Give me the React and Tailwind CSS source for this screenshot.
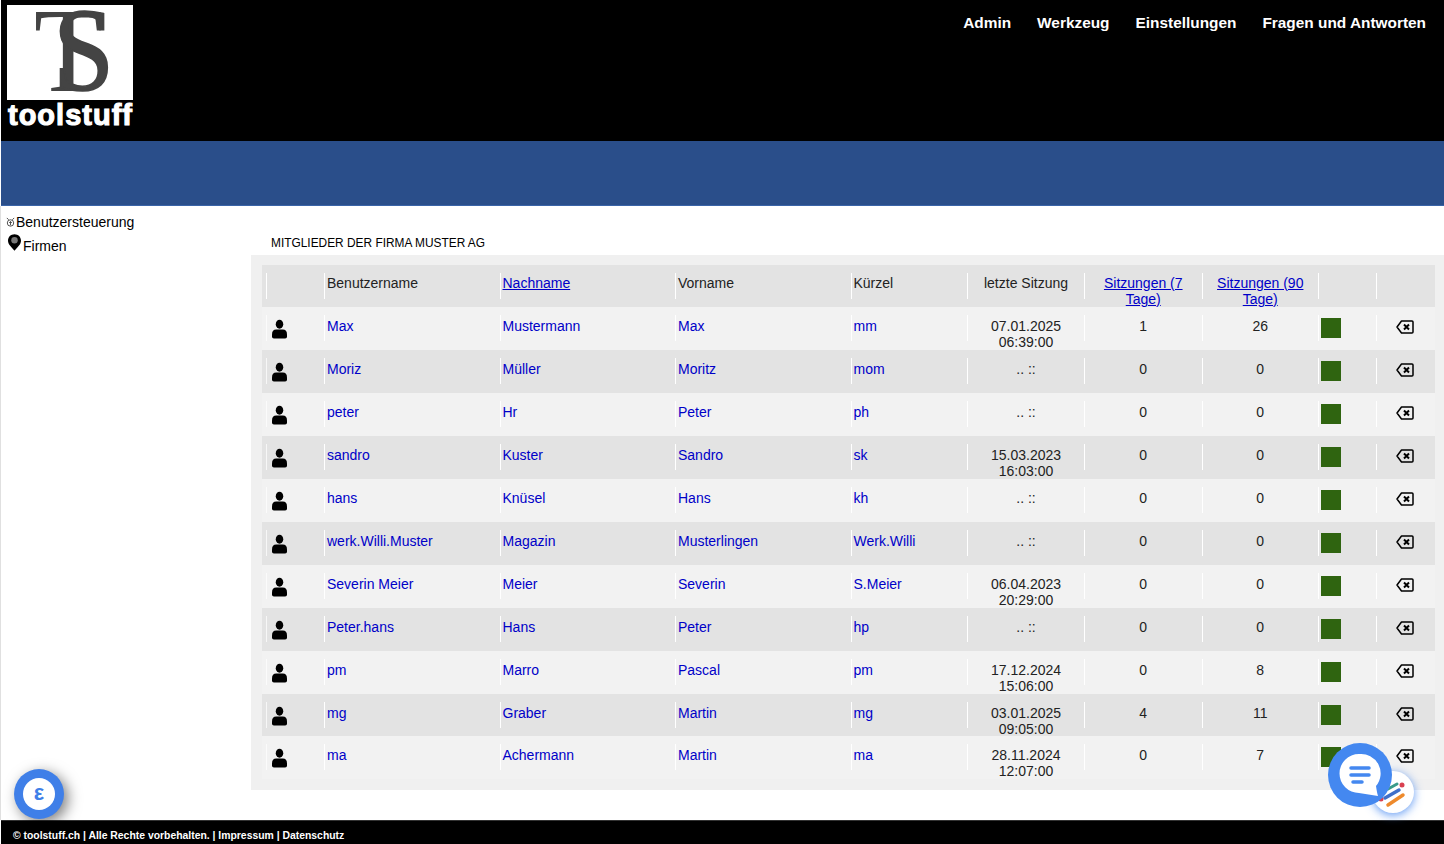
const members = [
	{ user: "Max", last: "Mustermann", first: "Max", short: "mm", date: "07.01.2025", time: "06:39:00", s7: "1", s90: "26" },
	{ user: "Moriz", last: "Müller", first: "Moritz", short: "mom", s7: "0", s90: "0" },
	{ user: "peter", last: "Hr", first: "Peter", short: "ph", s7: "0", s90: "0" },
	{ user: "sandro", last: "Kuster", first: "Sandro", short: "sk", date: "15.03.2023", time: "16:03:00", s7: "0", s90: "0" },
	{ user: "hans", last: "Knüsel", first: "Hans", short: "kh", s7: "0", s90: "0" },
	{ user: "werk.Willi.Muster", last: "Magazin", first: "Musterlingen", short: "Werk.Willi", s7: "0", s90: "0" },
	{ user: "Severin Meier", last: "Meier", first: "Severin", short: "S.Meier", date: "06.04.2023", time: "20:29:00", s7: "0", s90: "0" },
	{ user: "Peter.hans", last: "Hans", first: "Peter", short: "hp", s7: "0", s90: "0" },
	{ user: "pm", last: "Marro", first: "Pascal", short: "pm", date: "17.12.2024", time: "15:06:00", s7: "0", s90: "8" },
	{ user: "mg", last: "Graber", first: "Martin", short: "mg", date: "03.01.2025", time: "09:05:00", s7: "4", s90: "11" },
	{ user: "ma", last: "Achermann", first: "Martin", short: "ma", date: "28.11.2024", time: "12:07:00", s7: "0", s90: "7" },
];

const rowGrid =
	"grid grid-cols-[58px_175.5px_175.5px_175.5px_116.5px_117px_117.5px_116.5px_58px_59px] pl-1";
const cell = "border-l border-white h-[26px] pl-[2px] leading-4";
const centerCell = "border-l border-white h-[26px] text-center leading-4";

const UserIcon = () => (
	<svg viewBox="0 0 16 20" className="w-[15px] h-5 mt-[4px] ml-[5px]" fill="#000">
		<ellipse cx="8" cy="4.800" rx="4" ry="4.800" />
		<path d="M2 20 Q0 20 0 18 L0 15.500 Q0 10.500 4.500 10.500 L11.500 10.500 Q16 10.500 16 15.500 L16 18 Q16 20 14 20 Z" />
	</svg>
);

const DeleteIcon = () => (
	<svg viewBox="0 0 18 14" className="w-[18px] h-[14px] ml-[19px] mt-[5px]" fill="none" stroke="#000">
		<path d="M5.500 1 L16 1 Q17 1 17 2 L17 12 Q17 13 16 13 L5.500 13 L1 7 Z" strokeWidth="1.500" strokeLinejoin="round" />
		<path d="M8 4.500 L13 9.500 M13 4.500 L8 9.500" strokeWidth="2" />
	</svg>
);

const Logo = () => (
	<div className="w-[126px]">
		<div className="w-[126px] h-[95px] bg-white">
			<svg viewBox="0 0 126 95" className="w-full h-full overflow-visible">
				<text x="0" y="0" fontFamily="Liberation Serif" fontSize="112" fill="#444" transform="translate(27 86) scale(1 1.08)">
					T
				</text>
				<text x="0" y="0" fontFamily="Liberation Serif" fontSize="110" fill="#444" stroke="#444" strokeWidth="1.500" transform="translate(46 85) scale(1 1.08)">
					S
				</text>
			</svg>
		</div>
		<div className="text-white text-[29px] leading-[29px] font-bold tracking-[1px] [-webkit-text-stroke:1.100px_white] mt-[1px] ml-[1px]">
			toolstuff
		</div>
	</div>
);

const MemberRow = ({ m, index }) => (
	<div className={`${rowGrid} ${index === 9 ? "h-[42px]" : "h-[43px]"} pt-2 ${index % 2 === 0 ? "bg-[#f2f2f2]" : "bg-[#e3e3e3]"}`}>
		<div className="border-l border-white/70 h-[26px]">
			<UserIcon />
		</div>
		<div className={cell}>
			<a className="text-[#0000c8] block pt-[3px]">{m.user}</a>
		</div>
		<div className={cell}>
			<a className="text-[#0000c8] block pt-[3px]">{m.last}</a>
		</div>
		<div className={cell}>
			<a className="text-[#0000c8] block pt-[3px]">{m.first}</a>
		</div>
		<div className={cell}>
			<a className="text-[#0000c8] block pt-[3px]">{m.short}</a>
		</div>
		<div className={`${centerCell} pt-[3px]`}>
			{m.date ? (
				<>
					{m.date}
					<br />
					{m.time}
				</>
			) : (
				".. ::"
			)}
		</div>
		<div className={`${centerCell} pt-[3px]`}>{m.s7}</div>
		<div className={`${centerCell} pt-[3px]`}>{m.s90}</div>
		<div className="border-l border-white h-[26px] pl-[2px] pt-[3px]">
			<div className="w-5 h-5 bg-[#2f6410]" />
		</div>
		<div className="border-l border-white h-[26px]">
			<DeleteIcon />
		</div>
	</div>
);

export default function App() {
	return (
		<div className="h-[844px] flex flex-col font-['Liberation_Sans',Arial,sans-serif] text-[14px] text-[#222] bg-white overflow-hidden relative">
			<header className="ml-px h-[141px] bg-black flex justify-between pl-[6px] pt-[5px] pr-[18px]">
				<Logo />
				<nav className="flex gap-[26px] text-white text-[15.4px] font-bold pt-[9px] leading-[18px]">
					<a>Admin</a>
					<a>Werkzeug</a>
					<a>Einstellungen</a>
					<a>Fragen und Antworten</a>
				</nav>
			</header>
			<div className="ml-px h-[65px] bg-[#2a4e8a] border-b border-[#3a64a8]" />
			<main className="flex-1 flex border-l border-[#e0e0e0]">
				<aside className="w-[250px] text-black pt-[7px] pl-[4px]">
					<div className="flex items-center h-[18px]">
						<svg viewBox="0 0 12 12" className="w-[11px] h-[11px]" fill="none" stroke="#444" strokeWidth="1">
							<circle cx="6" cy="6.500" r="3.500" />
							<path d="M2 1 L4 3 M10 1 L8 3 M4.500 6 L7.500 6 M6 4.500 L6 9" />
						</svg>
						<span>Benutzersteuerung</span>
					</div>
					<div className="flex h-[20px] mt-[4px] ml-[3px]">
						<svg viewBox="0 0 14 18" className="w-[13px] h-[17px] -mt-[1px]">
							<path d="M7 0 C3 0 0 3 0 7 C0 11 4 14 7 18 C10 14 14 11 14 7 C14 3 11 0 7 0 Z" fill="#000" />
							<circle cx="7" cy="6.500" r="3.500" fill="#777" />
						</svg>
						<span className="ml-[2px] mt-[1px]">Firmen</span>
					</div>
				</aside>
				<section className="flex-1 min-w-0">
					<h2 className="h-[49px] pt-[30px] pl-[20px] text-[11.9px] leading-[14px] text-black">MITGLIEDER DER FIRMA MUSTER AG</h2>
					<div className="h-[535px] bg-[#f0f0f0] pl-[11px] pr-[9px] pt-[10px]">
						<div className={`${rowGrid} h-[42px] pt-2 bg-[#e3e3e3]`}>
							<div className={cell} />
							<div className={`${cell} pt-[2px]`}>Benutzername</div>
							<div className={`${cell} pt-[2px]`}>
								<a className="text-[#0000c8] underline">Nachname</a>
							</div>
							<div className={`${cell} pt-[2px]`}>Vorname</div>
							<div className={`${cell} pt-[2px]`}>Kürzel</div>
							<div className={`${centerCell} pt-[2px]`}>letzte Sitzung</div>
							<div className={`${centerCell} pt-[2px]`}>
								<a className="text-[#0000c8] underline">Sitzungen (7 Tage)</a>
							</div>
							<div className={`${centerCell} pt-[2px]`}>
								<a className="text-[#0000c8] underline">Sitzungen (90 Tage)</a>
							</div>
							<div className={cell} />
							<div className={cell} />
						</div>
						{members.map((m, i) => (
							<MemberRow key={m.user} m={m} index={i} />
						))}
					</div>
				</section>
			</main>
			<footer className="h-6 ml-px bg-black border-t border-[#333] text-white text-[10.4px] font-bold pl-3 pt-[8px] leading-[13px]">
				© toolstuff.ch | Alle Rechte vorbehalten. | Impressum | Datenschutz
			</footer>

			<div className="absolute left-[14px] top-[769px] w-[50px] h-[50px] rounded-full bg-[#3f7fe8] shadow-[4px_4px_14px_rgba(0,0,0,0.5)] flex items-center justify-center">
				<div className="w-[32px] h-[32px] rounded-full bg-white flex items-center justify-center text-[#3f7fe8] font-bold text-[22px] leading-none pb-[2px]">
					ε
				</div>
			</div>
			<div className="absolute left-[1372px] top-[771px] w-[42px] h-[42px] rounded-full bg-white shadow-[0_2px_10px_rgba(60,130,240,0.8)]">
				<svg viewBox="0 0 42 42" className="w-full h-full">
					<path d="M16 18 L25 13" stroke="#3a9a8a" strokeWidth="3" strokeLinecap="round" />
					<path d="M13 27 L27 19" stroke="#3f6fc8" strokeWidth="3.500" strokeLinecap="round" />
					<path d="M16 34 L31 24" stroke="#ee8a2c" strokeWidth="3.500" strokeLinecap="round" />
					<circle cx="30" cy="14" r="2.500" fill="#d94050" />
					<circle cx="9" cy="28" r="2.500" fill="#d94050" />
				</svg>
			</div>
			<div className="absolute left-[1328px] top-[743px] w-16 h-16 rounded-full bg-[#4488f0] flex items-center justify-center">
				<svg viewBox="0 0 44 44" className="w-[44px] h-[44px]">
					<path d="M21 1 A19.500 19.500 0 1 0 21 40 L40 43 Q39 40 38 33 A19.500 19.500 0 0 0 21 1 Z" fill="#fff" />
					<path d="M13 15 H31 M13 22 H31 M15 29 H24" stroke="#4488f0" strokeWidth="3.500" strokeLinecap="round" />
				</svg>
			</div>
		</div>
	);
}
